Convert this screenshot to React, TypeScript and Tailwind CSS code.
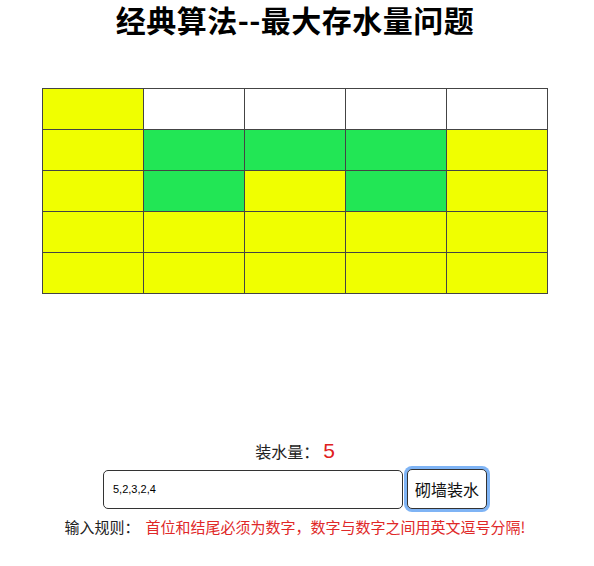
import { useState } from 'react'

const heights = [5, 2, 3, 2, 4]
const LEVELS = 5

function waterAt(hs: number[]) {
  return hs.map((h, i) => {
    const left = Math.max(...hs.slice(0, i + 1))
    const right = Math.max(...hs.slice(i))
    return Math.max(0, Math.min(left, right) - h)
  })
}

export default function App() {
  const [input, setInput] = useState(heights.join(','))
  const water = waterAt(heights)
  const total = water.reduce((a, b) => a + b, 0)

  return (
    <div className="flex min-h-[566px] flex-col items-center bg-white pr-[4px] font-['Noto_Sans_CJK_SC',sans-serif] text-black">
      <h1 className="pt-[2px] text-[30px] font-bold leading-[34px] tracking-[0.5px]">经典算法--最大存水量问题</h1>

      <div className="mt-[52px] grid grid-cols-5 border-l border-t border-[#444]">
        {Array.from({ length: LEVELS }).map((_, r) => {
          const level = LEVELS - r
          return heights.map((h, c) => {
            const wall = h >= level
            const wet = !wall && h + water[c] >= level
            return (
              <div
                key={`${r}-${c}`}
                className={
                  'h-[41px] w-[101px] border-b border-r border-[#444] ' +
                  (wall ? 'bg-[#f0ff00]' : wet ? 'bg-[#22e655]' : 'bg-white')
                }
              />
            )
          })
        })}
      </div>

      <div className="mt-[147px] flex items-center text-[16px] leading-[20px] text-[#222]">
        <span>装水量：</span>
        <span className="ml-[4px] font-['Liberation_Sans',sans-serif] text-[21px] text-[#e02020]">{total}</span>
      </div>

      <div className="mt-[8px] flex items-center gap-[4px]">
        <input
          value={input}
          onChange={(e) => setInput(e.target.value)}
          className="h-[39px] w-[300px] rounded-[5px] border border-[#333] px-[9px] font-['Liberation_Sans',sans-serif] text-[11px] outline-none"
        />
        <button
          type="button"
          className="h-[40px] w-[80px] rounded-[5px] border border-[#333] bg-white text-[16px] text-[#111] ring-[3px] ring-[#7fb4f5]"
        >
          砌墙装水
        </button>
      </div>

      <p className="mt-[8px] text-[15px] leading-[20px] text-[#222]">
        输入规则：<span className="ml-[6px] text-[#e02828]">首位和结尾必须为数字，数字与数字之间用英文逗号分隔!</span>
      </p>
    </div>
  )
}
